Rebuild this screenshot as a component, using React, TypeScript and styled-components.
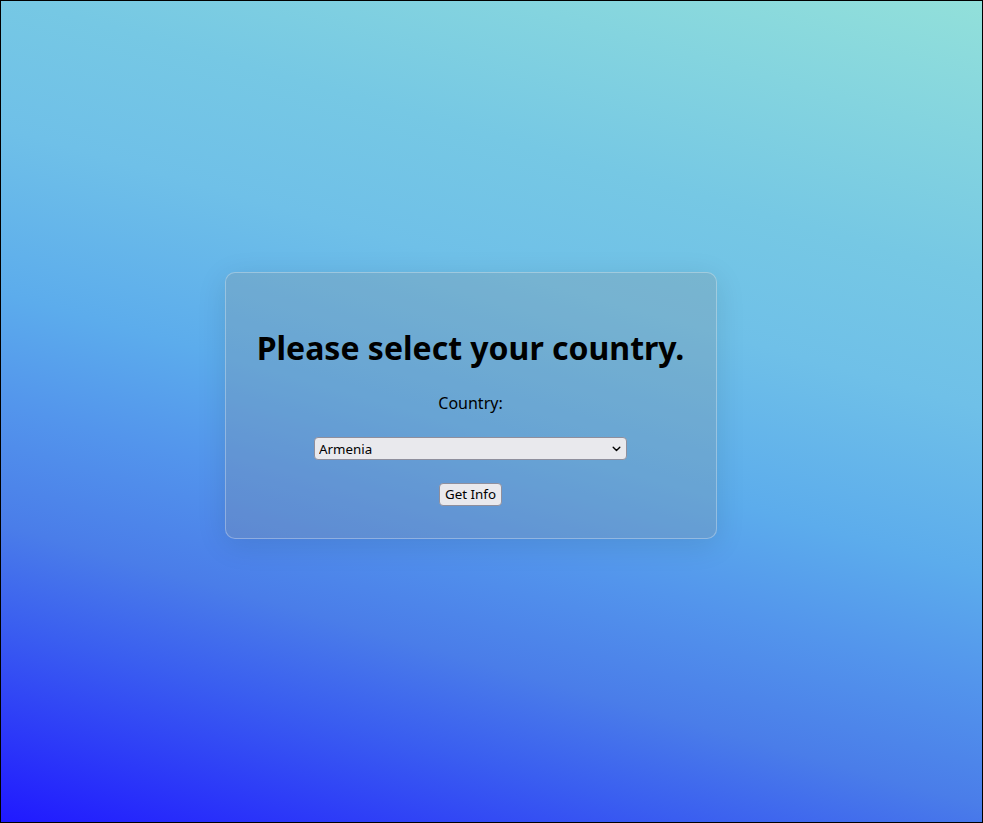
import React, { useState } from "react";
import styled, { createGlobalStyle } from "styled-components";

const GlobalStyle = createGlobalStyle`
  html, body {
    margin: 0;
    padding: 0;
    height: 100%;
  }
  body {
    font-family: "Noto Sans", "Open Sans", sans-serif;
  }
  * { box-sizing: border-box; }
`;

const Page = styled.div`
  width: 100vw;
  height: 100vh;
  border: 1px solid #000;
  display: flex;
  align-items: center;
  justify-content: center;
  padding: 0 42px 12px 0;
  background: linear-gradient(
    16deg,
    #2019ff 0%,
    #3a5ef0 18%,
    #4a7de9 27%,
    #5395ec 38%,
    #5cacec 48%,
    #6fc0e8 63%,
    #76c8e4 75%,
    #92e0da 100%
  );
  overflow: hidden;
`;

const Card = styled.div`
  width: 492px;
  display: flex;
  flex-direction: column;
  align-items: center;
  padding: 32px 32px 32px;
  border: 1px solid rgba(255, 255, 255, 0.3);
  border-radius: 10px;
  background: rgba(140, 140, 140, 0.25);
  box-shadow: 0 6px 30px rgba(0, 0, 0, 0.1);
`;

const Title = styled.h1`
  margin: 21px 0 23px;
  font-family: "Noto Sans", sans-serif;
  font-size: 32px;
  font-weight: 700;
  color: #000;
  white-space: nowrap;
  line-height: normal;
`;

const Label = styled.label`
  display: block;
  margin-bottom: 22.6px;
  font-family: "Noto Sans", sans-serif;
  font-size: 16px;
  color: #000;
  line-height: normal;
`;

const SelectWrap = styled.div`
  position: relative;
  width: 313px;
  height: 23px;
  margin-bottom: 23px;
`;

const Select = styled.select`
  appearance: none;
  -webkit-appearance: none;
  width: 100%;
  height: 100%;
  margin: 0;
  padding: 0 20px 0 4px;
  border: 1px solid #8f8f9d;
  border-radius: 4px;
  background: #e9e9ed;
  color: #000;
  font-family: "Noto Sans", sans-serif;
  font-size: 13.333px;
  outline: none;
`;

const Chevron = styled.svg`
  position: absolute;
  right: 6px;
  top: 9px;
  pointer-events: none;
`;

const Button = styled.button`
  height: 23px;
  margin: 0;
  padding: 0 5px;
  border: 1px solid #8f8f9d;
  border-radius: 4px;
  background: #e9e9ed;
  color: #000;
  font-family: "Noto Sans", sans-serif;
  font-size: 13.333px;
  line-height: 1;
  cursor: pointer;
`;

const countries = [
  "Afghanistan",
  "Albania",
  "Algeria",
  "Andorra",
  "Angola",
  "Argentina",
  "Armenia",
  "Australia",
  "Austria",
  "Azerbaijan",
];

export default function App() {
  const [country, setCountry] = useState("Armenia");
  return (
    <>
      <GlobalStyle />
      <Page>
        <Card>
          <Title>Please select your country.</Title>
          <Label htmlFor="country">Country:</Label>
          <SelectWrap>
            <Select
              id="country"
              value={country}
              onChange={(e) => setCountry(e.target.value)}
            >
              {countries.map((c) => (
                <option key={c} value={c}>
                  {c}
                </option>
              ))}
            </Select>
            <Chevron width="9" height="6" viewBox="0 0 9 6">
              <path
                d="M1.2 1.2 L4.5 4.5 L7.8 1.2"
                fill="none"
                stroke="#000"
                strokeWidth="1.4"
                strokeLinecap="round"
                strokeLinejoin="round"
              />
            </Chevron>
          </SelectWrap>
          <Button type="button">Get Info</Button>
        </Card>
      </Page>
    </>
  );
}
